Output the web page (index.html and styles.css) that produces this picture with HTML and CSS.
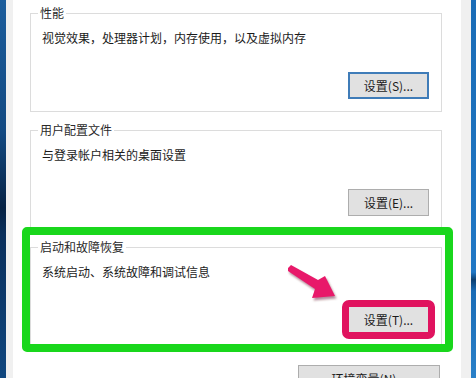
FILE: index.html
```html
<!DOCTYPE html>
<html lang="zh-CN">
<head>
  <meta charset="UTF-8">
  <title>系统属性 - 高级</title>
  <link rel="stylesheet" href="styles.css">
</head>
<body>
  <div class="desk desk-left"></div>
  <div class="frame">
    <div class="page">
      <fieldset class="group">
        <legend>性能</legend>
        <p class="desc">视觉效果，处理器计划，内存使用，以及虚拟内存</p>
        <button class="btn btn-default">设置(S)...</button>
      </fieldset>

      <fieldset class="group">
        <legend>用户配置文件</legend>
        <p class="desc">与登录帐户相关的桌面设置</p>
        <button class="btn">设置(E)...</button>
      </fieldset>

      <div class="marked">
        <fieldset class="group">
          <legend>启动和故障恢复</legend>
          <p class="desc">系统启动、系统故障和调试信息</p>
          <button class="btn btn-marked">设置(T)...</button>
        </fieldset>
        <div class="green-box"></div>
      </div>

      <button class="btn btn-wide">环境变量(N)...</button>

      <!-- annotation arrow -->
      <svg class="arrow" viewBox="270 255 80 50" width="80" height="50">
        <defs>
          <filter id="soft" x="-20%" y="-20%" width="140%" height="140%">
            <feGaussianBlur stdDeviation="1.2"/>
          </filter>
        </defs>
        <polygon points="288,268 291,265 318,280 325,276 335,296 312,298 315,289 288,271"
                 fill="rgba(90,0,30,0.45)" transform="translate(1.5,2.5)" filter="url(#soft)"/>
        <polygon points="288,268 291,265 318,280 325,276 335,296 312,298 315,289 288,271"
                 fill="#e8196a"/>
      </svg>
    </div>
  </div>
  <div class="desk desk-right"></div>
</body>
</html>
```

FILE: styles.css
```css
* {
  margin: 0;
  padding: 0;
  box-sizing: border-box;
}
body {
  width: 476px;
  height: 378px;
  display: flex;
  overflow: hidden;
  background: #f0f0f0;
  font-family: "Noto Sans CJK SC", "Microsoft YaHei", sans-serif;
  font-size: 12px;
  color: #1b1b1b;
}
.desk {
  height: 100%;
}
.desk-left {
  width: 6px;
  background: linear-gradient(#1c5d9c 0%, #134a82 35%, #062244 55%, #0a2f5c 62%, #10477f 100%);
}
.desk-right {
  width: 5px;
  background: linear-gradient(#1a6cb6 0%, #2077c4 72%, #0c3f70 74%, #1a6cb6 77%, #2a80c8 100%);
}
.frame {
  flex: 1;
  display: flex;
  padding: 0 10px 0 7px;
  background: #f0f0f0;
}
.page {
  flex: 1;
  position: relative;
  display: flex;
  flex-direction: column;
  padding: 5px 19px 0 17px;
  background: #fff;
}
.group {
  height: 107px;
  flex-shrink: 0;
  display: flex;
  flex-direction: column;
  border: 1px solid #dcdcdc;
  padding: 0 12px 0 11px;
  margin-bottom: 10px;
}
.group legend {
  margin-left: -4px;
  padding: 0 2px;
  line-height: 16px;
  color: #2a2a2a;
}
.desc {
  margin-top: 9px;
  line-height: 16px;
}
.btn {
  align-self: flex-end;
  width: 81px;
  height: 27px;
  margin-top: 26px;
  border: 1px solid #adadad;
  background: #e1e1e1;
  font-family: inherit;
  font-size: 12px;
  color: #1b1b1b;
}
.btn-default {
  border: 2px solid #3f7cb8;
}
.btn-marked {
  outline: 7px solid #e0135f;
  outline-offset: -1px;
  border-radius: 1px;
}
.marked {
  position: relative;
  flex-shrink: 0;
}
.marked .group {
  margin-bottom: 0;
}
.green-box {
  position: absolute;
  left: -8px;
  top: -12px;
  right: -11px;
  bottom: -6px;
  border: 8px solid #19d71c;
  border-radius: 5px;
  pointer-events: none;
}
.btn-wide {
  flex-shrink: 0;
  width: 142px;
  height: 26px;
  margin-top: 19px;
  margin-right: 2px;
}
.arrow {
  position: absolute;
  left: 257px;
  top: 255px;
}
```
